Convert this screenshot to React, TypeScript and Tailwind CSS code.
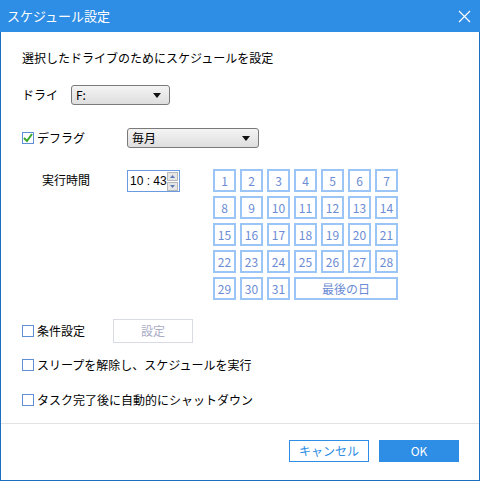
import React from 'react'

const FONT = { fontFamily: '"Noto Sans CJK JP", "Liberation Sans", sans-serif' }

function Caret() {
  return (
    <svg className="w-[8px] h-[5px]" viewBox="0 0 8 5">
      <path d="M0 0h8L4 5z" fill="#111" />
    </svg>
  )
}

function Select({ value, width }: { value: string; width: string }) {
  return (
    <div
      className={`${width} h-[20px] flex items-center justify-between pl-[4px] pr-[8px] rounded-[3px] border border-[#7a7a7a] bg-gradient-to-b from-[#f4f4f4] to-[#dedede] text-[12px] text-black`}
    >
      <span>{value}</span>
      <Caret />
    </div>
  )
}

function Checkbox({ checked }: { checked?: boolean }) {
  return (
    <div className="w-[12px] h-[12px] shrink-0 border border-[#5f8fd6] bg-white flex items-center justify-center">
      {checked && (
        <svg className="w-[10px] h-[10px]" viewBox="0 0 10 10">
          <path d="M1 5l3 3 5-7" fill="none" stroke="#3aa82c" strokeWidth={2} />
        </svg>
      )}
    </div>
  )
}

function Day({ label, wide }: { label: string; wide?: boolean }) {
  return (
    <div
      className={`${wide ? 'col-span-4' : ''} h-[23px] border-2 border-[#9cc5f7] flex items-center justify-center text-[12px] text-[#6b8bd4]`}
    >
      {label}
    </div>
  )
}

export default function App() {
  const days = Array.from({ length: 31 }, (_, i) => String(i + 1))
  return (
    <div style={FONT} className="w-[480px] h-[481px] flex flex-col bg-white border border-[#1c6fbf] border-t-0 leading-[16px]">
      {/* Title bar */}
      <div className="h-[32px] shrink-0 bg-[#2e8de5] flex items-center justify-between pl-[7px] pr-[9px] -mx-px">
        <span className="text-white text-[13px]">スケジュール設定</span>
        <svg className="w-[13px] h-[13px]" viewBox="0 0 13 13">
          <path d="M1 1l11 11M12 1L1 12" stroke="#fff" strokeWidth={1.2} />
        </svg>
      </div>

      {/* Body */}
      <div className="flex-1 flex flex-col pl-[21px] text-[12px] text-black">
        <div className="mt-[18px] h-[17px]">選択したドライブのためにスケジュールを設定</div>

        <div className="mt-[18px] h-[20px] flex items-center">
          <span className="w-[49px]">ドライ</span>
          <Select value="F:" width="w-[99px]" />
        </div>

        <div className="mt-[23px] h-[20px] flex items-center">
          <div className="w-[105px] flex items-center gap-[3px]">
            <Checkbox checked />
            <span>デフラグ</span>
          </div>
          <Select value="毎月" width="w-[132px]" />
        </div>

        <div className="mt-[21px] flex items-start">
          <span className="pl-[20px] w-[105px] pt-[3px]">実行時間</span>
          <div className="mt-[1px] w-[53px] h-[22px] border border-[#6a9ae0] flex items-center justify-between pl-[2px] pr-[1px]">
            <span className="text-[12px] whitespace-nowrap" style={{ fontFamily: '"Liberation Sans", sans-serif' }}>
              10 : 43
            </span>
            <div className="flex flex-col gap-[1px]">
              <div className="w-[11px] h-[9px] bg-[#e6e6e6] border border-[#b8b8b8] flex items-center justify-center">
                <svg className="w-[5px] h-[3px]" viewBox="0 0 5 3"><path d="M0 3h5L2.5 0z" fill="#5a7bb8" /></svg>
              </div>
              <div className="w-[11px] h-[9px] bg-[#e6e6e6] border border-[#b8b8b8] flex items-center justify-center">
                <svg className="w-[5px] h-[3px]" viewBox="0 0 5 3"><path d="M0 0h5L2.5 3z" fill="#5a7bb8" /></svg>
              </div>
            </div>
          </div>
          <div className="ml-[33px] grid grid-cols-[repeat(7,23px)] gap-[4px]">
            {days.map((d) => (
              <Day key={d} label={d} />
            ))}
            <Day label="最後の日" wide />
          </div>
        </div>

        <div className="mt-[19px] h-[24px] flex items-center">
          <div className="w-[91px] flex items-center gap-[3px]">
            <Checkbox />
            <span>条件設定</span>
          </div>
          <div className="w-[80px] h-[24px] border border-[#d8dbe3] flex items-center justify-center text-[#a9abc4]">
            設定
          </div>
        </div>

        <div className="mt-[10px] h-[24px] flex items-center gap-[3px]">
          <Checkbox />
          <span>スリープを解除し、スケジュールを実行</span>
        </div>

        <div className="mt-[11px] h-[24px] flex items-center gap-[3px]">
          <Checkbox />
          <span>タスク完了後に自動的にシャットダウン</span>
        </div>
      </div>

      {/* Footer */}
      <div className="h-[57px] shrink-0 border-t border-[#e3e3e3] flex items-start justify-end gap-[10px] pt-[16px] pr-[20px]">
        <div className="w-[80px] h-[22px] border border-[#2e8de5] flex items-center justify-center text-[12px] text-[#2e8de5]">
          キャンセル
        </div>
        <div className="w-[80px] h-[22px] bg-[#2e8de5] flex items-center justify-center text-[12px] text-white">
          OK
        </div>
      </div>
    </div>
  )
}
